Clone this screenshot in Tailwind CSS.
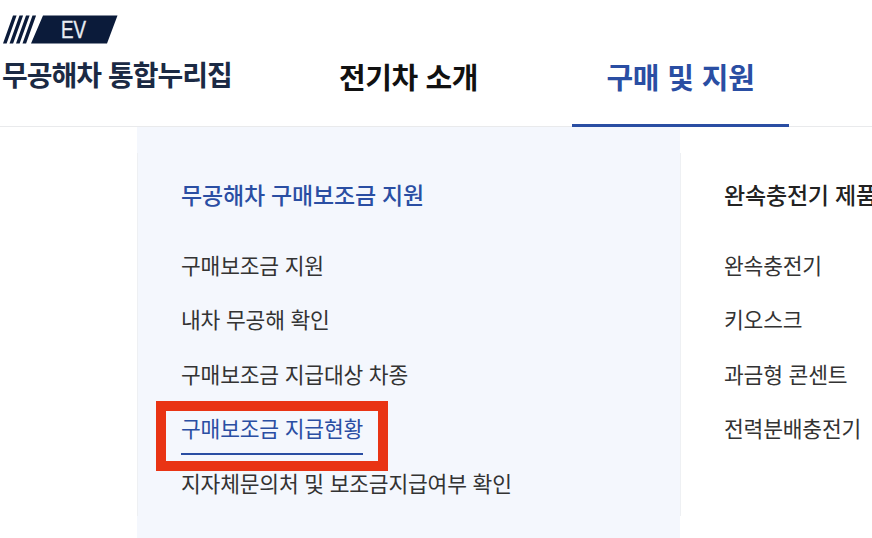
<!DOCTYPE html>
<html lang="ko"><head><meta charset="utf-8">
<script src="https://cdn.jsdelivr.net/npm/@tailwindcss/browser@4"></script>
</head>
<body class="bg-white overflow-hidden font-['Noto_Sans_CJK_KR','Noto_Sans',sans-serif]">
<div class="relative w-[872px] h-[538px] overflow-hidden">
  <header class="h-[127px] border-b border-[#e9eaec] flex items-stretch">
    <div class="w-[339px] shrink-0 pl-[2px] pt-[15px]">
      <svg width="116" height="29" viewBox="0 0 116 29" class="block ml-[1px]">
        <path d="M0 28.500L10 0.500H13.600L3.600 28.500Z M6.500 28.500L16.500 0.500H20.100L10.100 28.500Z M13 28.500L23 0.500H26.600L16.600 28.500Z M19.500 28.500L29.500 0.500H33.100L23.100 28.500Z M28 28.500L40 0.500H114.500L104 28.500Z" fill="#0b1b3a"/>
        <text x="70.500" y="22.500" text-anchor="middle" fill="#e8ecf3" stroke="#e8ecf3" stroke-width="0.400" font-size="23" font-family="Liberation Sans" textLength="25" lengthAdjust="spacingAndGlyphs">EV</text>
      </svg>
      <div class="text-[28px] leading-[38px] font-bold text-[#1b2a44] tracking-[-1px] whitespace-nowrap mt-[11px]">무공해차 통합누리집</div>
    </div>
    <nav class="flex items-start">
      <div class="w-[233px] pt-[54px] text-[29px] leading-[44px] font-bold text-[#111] whitespace-nowrap tracking-[-0.400px]">전기차 소개</div>
      <div class="w-[217px] h-[127px] pt-[54px] text-center text-[29px] leading-[44px] font-bold text-[#2a4ea3] whitespace-nowrap border-b-[3px] border-[#2a4ea3] tracking-[-0.200px]">구매 및 지원</div>
    </nav>
  </header>
  <main class="flex ml-[137px] h-[411px]">
    <section class="w-[543px] shrink-0 bg-[#f4f7fd] pt-[26px]">
      <div class="h-[363px] border-l border-[#eef0f3] pl-[43px] pt-[26px]">
        <h2 class="text-[23px] leading-[30px] font-medium text-[#2a4ea3] tracking-[-0.200px] whitespace-nowrap">무공해차 구매보조금 지원</h2>
        <ul class="mt-[41px] flex flex-col gap-[24.400px] text-[21.500px] leading-[30px] text-[#333] tracking-[-0.200px] whitespace-nowrap">
          <li>구매보조금 지원</li>
          <li>내차 무공해 확인</li>
          <li>구매보조금 지급대상 차종</li>
          <li class="text-[#2a4ea3] w-fit relative">구매보조금 지급현황<span class="absolute left-0 right-0 top-[40px] h-[2px] bg-[#2a4ea3]"></span></li>
          <li>지자체문의처 및 보조금지급여부 확인</li>
        </ul>
      </div>
    </section>
    <section class="flex-1 mt-[26px] h-[363px] border-l border-[#eef0f3] pl-[43px] pt-[26px]">
      <h2 class="text-[23px] leading-[30px] font-medium text-[#222] tracking-[-0.200px] whitespace-nowrap">완속충전기 제품</h2>
      <ul class="mt-[41px] flex flex-col gap-[24.400px] text-[21.500px] leading-[30px] text-[#333] tracking-[-0.200px] whitespace-nowrap">
        <li>완속충전기</li>
        <li>키오스크</li>
        <li>과금형 콘센트</li>
        <li>전력분배충전기</li>
      </ul>
    </section>
  </main>
  <div class="absolute left-[156px] top-[401px] w-[232px] h-[70px] border-[10px] border-[#e93414]"></div>
</div>
</body></html>
